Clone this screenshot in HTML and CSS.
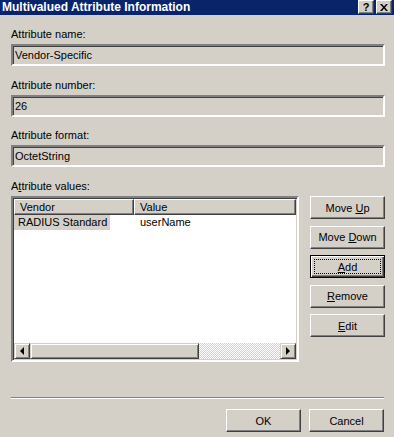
FILE: index.html
```html
<!DOCTYPE html>
<html lang="en">
<head>
  <meta charset="UTF-8">
  <title>Multivalued Attribute Information</title>
  <link rel="stylesheet" href="styles.css">
</head>
<body>

<div class="titlebar">
  <span class="title">Multivalued Attribute Information</span>
  <div class="caption-buttons">
    <span class="cbtn cbtn-help">?</span>
    <span class="cbtn">
      <svg width="8" height="7" viewBox="0 0 8 7">
        <path d="M0 0h2l2 2.5L6 0h2L5 3.5 8 7H6L4 4.5 2 7H0l3-3.5z" fill="#000"/>
      </svg>
    </span>
  </div>
</div>

<div class="dialog">
  <div class="field">
    <div class="label">Attribute name:</div>
    <div class="box">Vendor-Specific</div>
  </div>
  <div class="field">
    <div class="label">Attribute number:</div>
    <div class="box">26</div>
  </div>
  <div class="field">
    <div class="label">Attribute format:</div>
    <div class="box">OctetString</div>
  </div>

  <div class="label values-label">A<u>t</u>tribute values:</div>
  <div class="values">
    <div class="list">
      <div class="list-head">
        <div class="col col-vendor">Vendor</div>
        <div class="col col-value">Value</div>
      </div>
      <div class="list-body">
        <div class="row">
          <div class="cell cell-vendor"><span class="sel">RADIUS Standard</span></div>
          <div class="cell cell-value">userName</div>
        </div>
      </div>
      <div class="hscroll">
        <div class="sbtn"><span class="arrow arrow-left"></span></div>
        <div class="thumb"></div>
        <div class="track"></div>
        <div class="sbtn"><span class="arrow arrow-right"></span></div>
      </div>
    </div>

    <div class="side-buttons">
      <div class="btn"><span>Move <u>U</u>p</span></div>
      <div class="btn"><span>Move <u>D</u>own</span></div>
      <div class="btn btn-default"><span><u>A</u>dd</span></div>
      <div class="btn"><span><u>R</u>emove</span></div>
      <div class="btn"><span><u>E</u>dit</span></div>
    </div>
  </div>

  <div class="separator"></div>

  <div class="footer">
    <div class="btn"><span>OK</span></div>
    <div class="btn"><span>Cancel</span></div>
  </div>
</div>

</body>
</html>
```

FILE: styles.css
```css
body {
  margin: 0;
  width: 394px;
  height: 437px;
  background: #d4d0c8;
  font-family: "Liberation Sans", Arial, sans-serif;
  font-size: 11px;
  color: #000;
  overflow: hidden;
}

/* title bar */
.titlebar {
  height: 15px;
  background: #0a246a;
  display: flex;
  justify-content: space-between;
  align-items: flex-start;
}

.title {
  color: #fff;
  font-weight: bold;
  font-size: 12px;
  line-height: 14px;
  padding-left: 2px;
}

.caption-buttons {
  display: flex;
  gap: 2px;
  padding-right: 2px;
}

.cbtn {
  width: 14px;
  height: 12px;
  background: #d4d0c8;
  border: 1px solid;
  border-color: #fff #404040 #404040 #fff;
  box-shadow: inset -1px -1px #808080;
  display: flex;
  align-items: center;
  justify-content: center;
  font-weight: bold;
  font-size: 11px;
  line-height: 12px;
}

/* dialog body */
.dialog {
  padding: 13px 9px 0 11px;
}

.label {
  line-height: 13px;
  height: 13px;
  margin-bottom: 3px;
  white-space: nowrap;
}

.field + .field {
  margin-top: 12.5px;
}

.box {
  height: 18px;
  line-height: 18px;
  padding-left: 2px;
  border: 2px solid;
  border-color: #808080 #fff #fff #808080;
  box-shadow: inset 1px 1px #404040, inset -1px -1px #d4d0c8;
  background: #d4d0c8;
}

.values-label {
  margin-top: 13px;
}

.values {
  display: flex;
  gap: 11px;
}

/* list view */
.list {
  width: 283px;
  height: 161px;
  border: 2px solid;
  border-color: #808080 #fff #fff #808080;
  box-shadow: inset 1px 1px #404040, inset -1px -1px #d4d0c8;
  background: #fff;
  display: flex;
  flex-direction: column;
  padding: 0 1px 1px 1px;
  box-sizing: content-box;
}

.list-head {
  display: flex;
  height: 16px;
  margin-top: 1px;
}

.col {
  background: #d4d0c8;
  border-top: 1px solid #fff;
  border-left: 1px solid #fff;
  border-right: 1px solid #404040;
  border-bottom: 1px solid #404040;
  box-shadow: inset -1px -1px #808080;
  line-height: 14px;
  padding-left: 5px;
  box-sizing: border-box;
}

.col-vendor {
  width: 120px;
}

.col-value {
  flex: 1;
}

.list-body {
  flex: 1;
}

.row {
  display: flex;
  height: 15px;
  line-height: 15px;
}

.cell-vendor {
  width: 120px;
}

.sel {
  display: inline-block;
  background: #d4d0c8;
  padding: 0 3px 0 4px;
}

.cell-value {
  padding-left: 6px;
}

/* horizontal scroll bar */
.hscroll {
  height: 16px;
  display: flex;
}

.sbtn,
.thumb {
  background: #d4d0c8;
  border: 1px solid;
  border-color: #d4d0c8 #404040 #404040 #d4d0c8;
  box-shadow: inset 1px 1px #fff, inset -1px -1px #808080;
  box-sizing: border-box;
}

.sbtn {
  width: 16px;
  display: flex;
  align-items: center;
  justify-content: center;
}

.thumb {
  width: 169px;
}

.track {
  flex: 1;
  background: repeating-conic-gradient(#d4d0c8 0 25%, #fff 0 50%) 0 0 / 2px 2px;
}

.arrow {
  width: 0;
  height: 0;
  border-top: 4px solid transparent;
  border-bottom: 4px solid transparent;
}

.arrow-left {
  border-right: 4px solid #000;
}

.arrow-right {
  border-left: 4px solid #000;
}

/* push buttons */
.side-buttons {
  display: flex;
  flex-direction: column;
  gap: 6.5px;
}

.btn {
  position: relative;
  width: 75px;
  height: 23px;
  box-sizing: border-box;
  border: 1px solid;
  border-color: #fff #404040 #404040 #fff;
  box-shadow: inset -1px -1px #808080;
  display: flex;
  align-items: center;
  justify-content: center;
  white-space: nowrap;
}

.btn-default {
  border-color: #000;
  box-shadow: inset 1px 1px #fff, inset -1px -1px #404040, inset -2px -2px #808080;
}

.btn-default::after {
  content: "";
  position: absolute;
  inset: 3px;
  border: 1px dotted #000;
}

.separator {
  margin-top: 35px;
  width: 373px;
  height: 1px;
  background: #808080;
  border-bottom: 1px solid #fff;
}

.footer {
  margin-top: 10px;
  display: flex;
  justify-content: flex-end;
  gap: 8px;
  padding-right: 1px;
}
```
